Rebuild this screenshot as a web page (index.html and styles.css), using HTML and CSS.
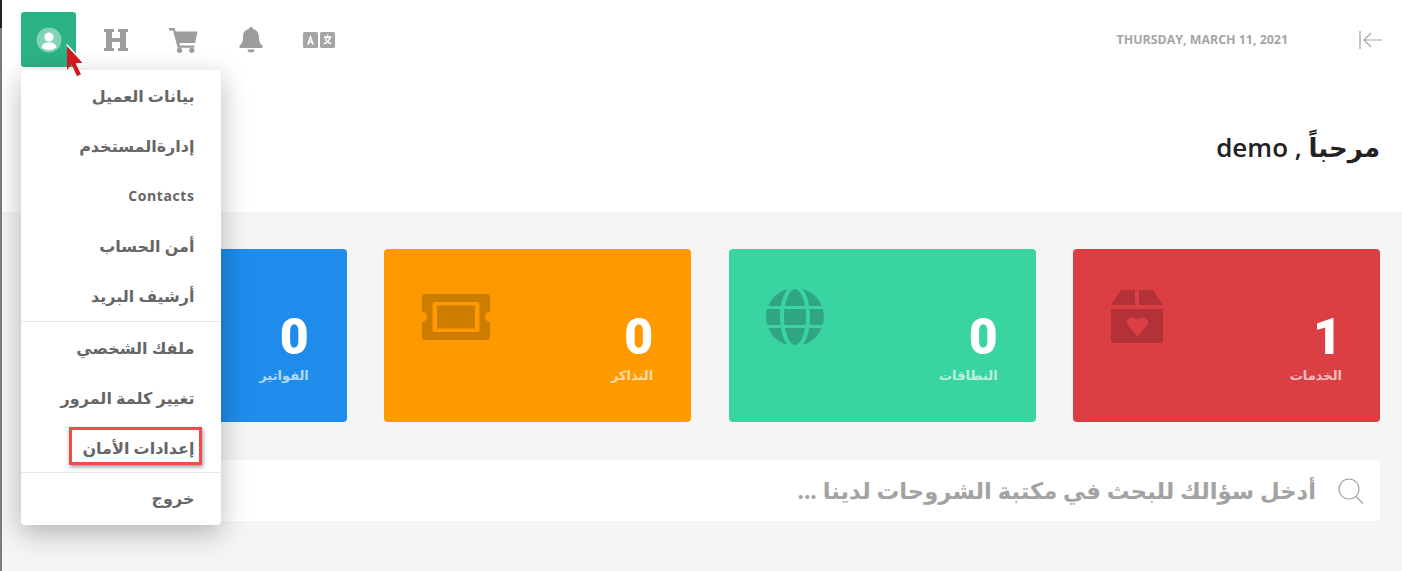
FILE: index.html
```html
<!DOCTYPE html>
<html lang="ar">

<head>
    <meta charset="UTF-8">
    <title>demo</title>
    <link rel="stylesheet" href="styles.css">
</head>

<body>
    <div class="edge"></div>
    <div class="page">
        <div class="head">
            <div class="topbar">
                <div class="tools">
                    <span class="tool tool-user">
                        <svg width="26" height="26" viewBox="0 0 26 26">
                            <circle cx="13" cy="13" r="12.5" fill="#fff" fill-opacity=".42" />
                            <circle cx="13" cy="10" r="4.6" fill="#fff" />
                            <path d="M5.5 20.6c.6-3.9 3.6-5.4 7.5-5.4s6.900 1.500 7.500 5.400a12 12 0 0 1-15 0z" fill="#fff" />
                        </svg>
                    </span>
                    <span class="tool">
                        <svg width="24" height="24" viewBox="0 0 24 24">
                            <path d="M0 1h10v3H8v6h8V4h-2V1h10v3h-2v16h2v3H14v-3h2v-6H8v6h2v3H0v-3h2V4H0z" fill="#9d9d9d" />
                        </svg>
                    </span>
                    <span class="tool">
                        <svg width="29" height="26" viewBox="0 0 29 26">
                            <path d="M0 1h5.600l1.100 3.400H28.500l-2.400 11.700H10.400l.5 2.300h14.400v2.400H8.700L4 3.400H0z" fill="#9d9d9d" />
                            <circle cx="10.500" cy="23.300" r="2.600" fill="#9d9d9d" />
                            <circle cx="22.800" cy="23.300" r="2.600" fill="#9d9d9d" />
                        </svg>
                    </span>
                    <span class="tool">
                        <svg width="24" height="26" viewBox="0 0 24 26">
                            <path d="M12 0c1.300 0 2.200.9 2.200 2.100 4 .9 5.800 3.900 5.800 8.100 0 4.700 1.300 6.400 3.400 8.400.6.700.2 2.400-1 2.400H1.600c-1.200 0-1.600-1.700-1-2.400C2.700 16.600 4 14.900 4 10.200c0-4.200 1.800-7.200 5.800-8.100C9.800.9 10.700 0 12 0z" fill="#9d9d9d" />
                            <path d="M8.500 22.600h7a3.500 3 0 0 1-7 0z" fill="#9d9d9d" />
                        </svg>
                    </span>
                    <span class="tool">
                        <svg width="32" height="16" viewBox="0 0 32 16">
                            <rect width="15" height="16" rx="1.500" fill="#a5a5a5" />
                            <rect x="17" width="15" height="16" rx="1.500" fill="#a5a5a5" />
                            <path d="M7.500 3l3.400 9.500H9l-.6-1.900H6.500l-.6 1.900H4L7.500 3zm0 3.600l-.6 2.500h1.200z" fill="#fff" />
                            <path d="M23.700 2.500h1.600v1.700h3.300v1.500h-.9c-.4 1.700-1.100 3-2.100 4 .8.500 1.800.9 3 1.200l-.6 1.500c-1.400-.4-2.500-.9-3.500-1.600-.9.700-2 1.200-3.400 1.600l-.6-1.400c1.200-.3 2.200-.7 3-1.300-.7-.8-1.300-1.700-1.700-2.800h1.600c.3.700.7 1.300 1.200 1.800.6-.7 1.100-1.600 1.400-2.500h-5.100V4.200h3.400z" fill="#fff" />
                        </svg>
                    </span>
                </div>
                <div class="top-right">
                    <span class="date">THURSDAY, MARCH 11, 2021</span>
                    <svg class="collapse" width="24" height="20" viewBox="0 0 24 20">
                        <path d="M1 1v18M23 10H5M12 3l-7 7 7 7" fill="none" stroke="#a3a3a3" stroke-width="1.200" />
                    </svg>
                </div>
            </div>
            <h1 class="welcome" dir="rtl">مرحباً , demo</h1>
        </div>

        <div class="content">
            <div class="cards">
                <div class="card card-blue">
                    <div class="card-text">
                        <div class="num">0</div>
                        <div class="label">الفواتير</div>
                    </div>
                </div>
                <div class="card card-orange">
                    <div class="card-icon">
                        <svg width="68" height="46" viewBox="0 0 68 46">
                            <path fill-rule="evenodd" fill="#cc7c00" d="M3 0h62a3 3 0 0 1 3 3v15a5 5 0 0 0 0 10v15a3 3 0 0 1-3 3H3a3 3 0 0 1-3-3V28a5 5 0 0 0 0-10V3a3 3 0 0 1 3-3zm9 8a1.500 1.500 0 0 0-1.500 1.500v27A1.500 1.500 0 0 0 12 38h44a1.500 1.500 0 0 0 1.500-1.500v-27A1.500 1.500 0 0 0 56 8z" />
                            <rect x="15" y="11.500" width="38" height="23" fill="#cc7c00" />
                        </svg>
                    </div>
                    <div class="card-text">
                        <div class="num">0</div>
                        <div class="label">التذاكر</div>
                    </div>
                </div>
                <div class="card card-green">
                    <div class="card-icon">
                        <svg width="58" height="58" viewBox="0 0 58 58">
                            <circle cx="29" cy="29" r="29" fill="#2fa583" />
                            <g fill="none" stroke="#3ad4a2" stroke-width="4">
                                <ellipse cx="29" cy="29" rx="13" ry="30" />
                                <path d="M0 19.500h58M0 38.500h58" stroke-width="3" />
                            </g>
                        </svg>
                    </div>
                    <div class="card-text">
                        <div class="num">0</div>
                        <div class="label">النطاقات</div>
                    </div>
                </div>
                <div class="card card-red">
                    <div class="card-icon">
                        <svg width="52" height="53" viewBox="0 0 52 53">
                            <path fill="#b23238" d="M10 0h14v15H0zM28 0h14l10 15H28zM0 19h52v31a3 3 0 0 1-3 3H3a3 3 0 0 1-3-3z" />
                            <path fill="#db3f44" d="M26.500 46L18 37c-6.500-6.500 3-14 8.500-7 5.500-7 15 .5 8.500 7z" />
                        </svg>
                    </div>
                    <div class="card-text">
                        <div class="num">1</div>
                        <div class="label">الخدمات</div>
                    </div>
                </div>
            </div>

            <div class="search" dir="rtl">
                <svg width="26" height="26" viewBox="0 0 26 26">
                    <circle cx="11" cy="11" r="10" fill="none" stroke="#a3a3a3" stroke-width="1.200" />
                    <path d="M18 18.500l7 7" fill="none" stroke="#a3a3a3" stroke-width="1.200" />
                </svg>
                <span>أدخل سؤالك للبحث في مكتبة الشروحات لدينا ...</span>
            </div>
        </div>
    </div>

    <div class="menu" dir="rtl">
        <div class="menu-group">
            <a>بيانات العميل</a>
            <a>إدارةالمستخدم</a>
            <a class="menu-latin">Contacts</a>
            <a>أمن الحساب</a>
            <a>أرشيف البريد</a>
        </div>
        <div class="menu-group menu-group-mid">
            <a>ملفك الشخصي</a>
            <a>تغيير كلمة المرور</a>
            <a>إعدادات الأمان</a>
        </div>
        <div class="menu-group">
            <a>خروج</a>
        </div>
    </div>

    <div class="callout"></div>

    <svg class="pointer" width="22" height="36" viewBox="0 0 22 36">
        <path d="M3 4l16 17-7.500.2 5.500 11-4 2-5.500-12L3 28z" fill="#d4181f" />
        <path d="M2.500 2.500L20.500 21.700l-7.600.3" fill="none" stroke="#fff" stroke-width="1.500" />
    </svg>
</body>

</html>
```
FILE: styles.css
```css
* {
    box-sizing: border-box;
}

body {
    margin: 0;
    background-color: #f5f5f5;
    font-family: "Open Sans", "DejaVu Sans", sans-serif;
    overflow: hidden;
}

.edge {
    position: absolute;
    left: 0;
    top: 0;
    width: 2px;
    height: 571px;
    background: linear-gradient(#222 28px, #7c7c7c 28px);
}

.page {
    height: 571px;
}

.head {
    height: 212px;
    padding: 12px 19px 0 21px;
    background-color: #fff;
}

.topbar {
    display: flex;
    justify-content: space-between;
    align-items: center;
}

.tools {
    display: flex;
    align-items: center;
}

.tool {
    width: 55px;
    height: 55px;
    margin-right: 12.5px;
    display: flex;
    align-items: center;
    justify-content: center;
}

.tool-user {
    background-color: #2bb287;
    border-radius: 3px;
}

.top-right {
    display: flex;
    align-items: center;
    gap: 71px;
}

.date {
    font-size: 12.4px;
    font-weight: 700;
    color: #a5a5a5;
}

.welcome {
    margin: 62px 3px 0 0;
    font-size: 26px;
    font-weight: 600;
    color: #222;
}

.content {
    padding: 37px 22px 0 0;
}

.cards {
    display: flex;
    justify-content: flex-end;
    gap: 37.4px;
}

.card {
    width: 307px;
    height: 173px;
    padding: 36px 38px 0 37.5px;
    border-radius: 4px;
    display: flex;
    justify-content: space-between;
    align-items: flex-start;
    color: #fff;
}

.card-blue {
    background-color: #1f8ceb;
    justify-content: flex-end;
}

.card-orange {
    background-color: #ff9900;
}

.card-green {
    background-color: #3ad4a2;
}

.card-red {
    background-color: #db3f44;
}

.card-icon {
    height: 63px;
    display: flex;
    align-items: center;
}

.card-text {
    margin-top: 26px;
    text-align: right;
}

.num {
    font-family: Roboto, sans-serif;
    font-size: 50px;
    font-weight: 900;
    line-height: 52px;
}

.label {
    margin-top: 3px;
    font-size: 13px;
    font-weight: 700;
    opacity: .65;
}

.search {
    height: 61px;
    margin: 38px 0 0 40px;
    padding: 0 16px;
    background-color: #fff;
    border-radius: 4px;
    display: flex;
    align-items: center;
    gap: 22px;
    font-size: 22.7px;
    font-weight: 700;
    color: #a3a3a3;
}

.menu {
    position: absolute;
    left: 21px;
    top: 70px;
    width: 200px;
    padding-top: 1px;
    padding-bottom: 2px;
    background-color: #fff;
    border-radius: 4px;
    box-shadow: 0 8px 28px rgba(0, 0, 0, .28);
}

.menu-group {
    border-top: 1px solid #e9e9e9;
}

.menu-group:first-child {
    border-top: 0;
}

.menu a {
    display: block;
    height: 50px;
    line-height: 50px;
    padding: 0 26.5px;
    font-size: 16px;
    font-weight: 700;
    color: #666;
}

.menu .menu-latin {
    font-size: 14px;
    letter-spacing: .6px;
}

.menu-group-mid a {
    line-height: 52px;
}

.callout {
    position: absolute;
    left: 69px;
    top: 427px;
    width: 133px;
    height: 38px;
    border: 3px solid #f04a4a;
    box-shadow: 1px 2px 4px rgba(0, 0, 0, .4);
}

.pointer {
    position: absolute;
    left: 64px;
    top: 42px;
}
```
